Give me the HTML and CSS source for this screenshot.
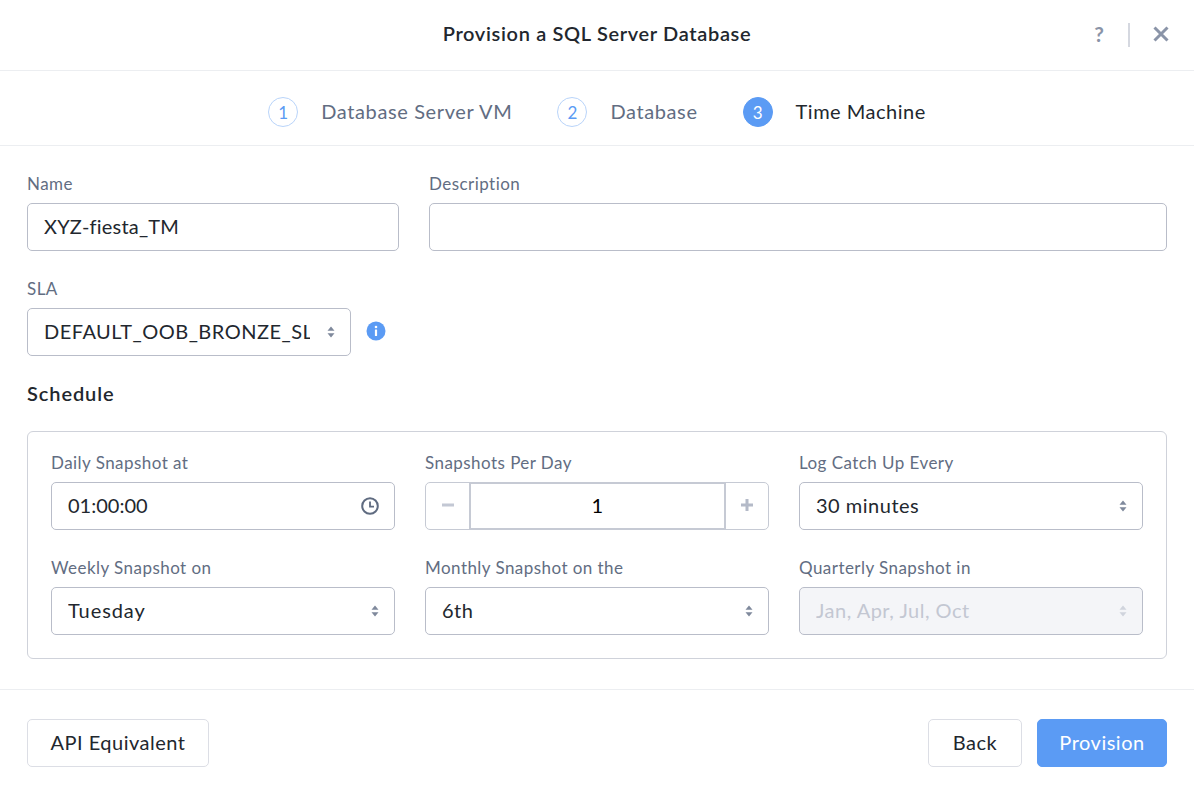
FILE: index.html
```html
<!DOCTYPE html>
<html lang="en">
<head>
    <meta charset="UTF-8">
    <meta name="viewport" content="width=device-width, initial-scale=1.0">
    <title>Provision a SQL Server Database</title>
    <link rel="stylesheet" href="styles.css">
</head>
<body>
    <div class="modal">
        <header class="modal-header">
            <h1>Provision a SQL Server Database</h1>
            <div class="header-actions">
                <button class="help-btn" type="button">?</button>
                <span class="header-divider"></span>
                <button class="close-btn" type="button" aria-label="Close">
                    <svg width="16" height="16" viewBox="0 0 16 16"><path d="M1.5 1.5l13 13M14.5 1.5l-13 13" stroke="#8a94a8" stroke-width="3" fill="none"/></svg>
                </button>
            </div>
        </header>

        <nav class="steps">
            <div class="step"><span class="step-num">1</span><span class="step-label">Database Server VM</span></div>
            <div class="step"><span class="step-num">2</span><span class="step-label">Database</span></div>
            <div class="step active"><span class="step-num">3</span><span class="step-label">Time Machine</span></div>
        </nav>

        <form class="form-body">
            <div class="row-name">
                <div class="field">
                    <label for="name">Name</label>
                    <input id="name" type="text" value="XYZ-fiesta_TM">
                </div>
                <div class="field">
                    <label for="description">Description</label>
                    <input id="description" type="text">
                </div>
            </div>

            <div class="field sla-field">
                <label for="sla">SLA</label>
                <div class="sla-row">
                    <div class="select-wrap sla-select">
                        <select id="sla"><option>DEFAULT_OOB_BRONZE_SLA</option></select>
                        <svg class="chevrons" width="8" height="12" viewBox="0 0 8 12"><path d="M4 .5l3.5 4.2H.5zM4 11.5L.5 7.3h7z" fill="#7f899c"/></svg>
                    </div>
                    <span class="info-icon">
                        <svg width="20" height="20" viewBox="0 0 20 20"><circle cx="10" cy="10" r="9.5" fill="#5b9bf4"/><circle cx="10" cy="6" r="1.3" fill="#fff"/><rect x="8.9" y="8.5" width="2.2" height="6.5" rx="0.5" fill="#fff"/></svg>
                    </span>
                </div>
            </div>

            <h2 class="section-title">Schedule</h2>

            <div class="schedule-box">
                <div class="field">
                    <label for="daily">Daily Snapshot at</label>
                    <div class="select-wrap">
                        <input id="daily" type="text" value="01:00:00">
                        <svg class="clock" width="18" height="18" viewBox="0 0 18 18"><circle cx="9" cy="9" r="7.8" fill="none" stroke="#5f6b80" stroke-width="2"/><path d="M9 4.5V9.6h4" fill="none" stroke="#5f6b80" stroke-width="1.8"/></svg>
                    </div>
                </div>
                <div class="field">
                    <label for="perday">Snapshots Per Day</label>
                    <div class="stepper">
                        <button type="button" class="stepper-btn">
                            <svg width="12" height="12" viewBox="0 0 12 12"><rect x="0" y="4.5" width="12" height="3" fill="#c3c8d4"/></svg>
                        </button>
                        <input id="perday" type="text" value="1">
                        <button type="button" class="stepper-btn">
                            <svg width="12" height="12" viewBox="0 0 12 12"><path d="M4.5 0h3v4.5H12v3H7.5V12h-3V7.5H0v-3h4.5z" fill="#b4bac8"/></svg>
                        </button>
                    </div>
                </div>
                <div class="field">
                    <label for="logcatch">Log Catch Up Every</label>
                    <div class="select-wrap">
                        <select id="logcatch"><option>30 minutes</option></select>
                        <svg class="chevrons" width="8" height="12" viewBox="0 0 8 12"><path d="M4 .5l3.5 4.2H.5zM4 11.5L.5 7.3h7z" fill="#7f899c"/></svg>
                    </div>
                </div>
                <div class="field">
                    <label for="weekly">Weekly Snapshot on</label>
                    <div class="select-wrap">
                        <select id="weekly"><option>Tuesday</option></select>
                        <svg class="chevrons" width="8" height="12" viewBox="0 0 8 12"><path d="M4 .5l3.5 4.2H.5zM4 11.5L.5 7.3h7z" fill="#7f899c"/></svg>
                    </div>
                </div>
                <div class="field">
                    <label for="monthly">Monthly Snapshot on the</label>
                    <div class="select-wrap">
                        <select id="monthly"><option>6th</option></select>
                        <svg class="chevrons" width="8" height="12" viewBox="0 0 8 12"><path d="M4 .5l3.5 4.2H.5zM4 11.5L.5 7.3h7z" fill="#7f899c"/></svg>
                    </div>
                </div>
                <div class="field">
                    <label for="quarterly">Quarterly Snapshot in</label>
                    <div class="select-wrap">
                        <select id="quarterly" disabled><option>Jan, Apr, Jul, Oct</option></select>
                        <svg class="chevrons" width="8" height="12" viewBox="0 0 8 12"><path d="M4 .5l3.5 4.2H.5zM4 11.5L.5 7.3h7z" fill="#d0d4dd"/></svg>
                    </div>
                </div>
            </div>
        </form>

        <footer class="modal-footer">
            <button type="button" class="btn btn-api">API Equivalent</button>
            <div class="footer-right">
                <button type="button" class="btn btn-back">Back</button>
                <button type="button" class="btn btn-primary">Provision</button>
            </div>
        </footer>
    </div>
</body>
</html>
```

FILE: styles.css
```css
* {
    box-sizing: border-box;
}

body {
    font-family: "Lato", "Open Sans", sans-serif;
    margin: 0;
    padding: 0;
    background-color: #fff;
    color: #22272e;
}

.modal {
    width: 1194px;
    height: 792px;
    display: flex;
    flex-direction: column;
}

.modal-header {
    height: 71px;
    padding-bottom: 4px;
    border-bottom: 1px solid #eceef1;
    display: flex;
    align-items: center;
    justify-content: center;
    position: relative;
}

.modal-header h1 {
    font-size: 20px;
    font-weight: 600;
    letter-spacing: 0.66px;
    margin: 0;
    color: #22272e;
}

.header-actions {
    position: absolute;
    top: 23px;
    right: 25px;
    display: flex;
    align-items: center;
    height: 24px;
}

.help-btn,
.close-btn {
    background: none;
    border: none;
    padding: 0;
    margin-bottom: 3px;
    cursor: pointer;
    display: flex;
    align-items: center;
    justify-content: center;
}

.help-btn {
    font-family: inherit;
    font-size: 21px;
    font-weight: 700;
    color: #8a94a8;
    width: 14px;
}

.header-divider {
    width: 2px;
    height: 24px;
    background-color: #d5d8e0;
    margin: 0 23px 0 22px;
}

.close-btn {
    width: 16px;
    height: 16px;
}

.steps {
    height: 75px;
    border-bottom: 1px solid #eceef1;
    display: flex;
    align-items: center;
    justify-content: center;
    gap: 45px;
    padding-top: 8px;
}

.step {
    display: flex;
    align-items: center;
    gap: 23px;
}

.step-num {
    width: 30px;
    height: 30px;
    border-radius: 50%;
    border: 1px solid #b9d4fa;
    color: #5b9bf4;
    font-size: 17px;
    display: flex;
    align-items: center;
    justify-content: center;
}

.step-label {
    font-size: 20px;
    letter-spacing: 0.62px;
    padding-bottom: 2px;
    color: #626d82;
}

.step.active .step-num {
    background-color: #5b9bf4;
    border-color: #5b9bf4;
    color: #fff;
}

.step.active .step-label {
    letter-spacing: 0.5px;
    color: #22272e;
}

.form-body {
    flex: 1;
    padding: 27px 27px 0;
    border-bottom: 1px solid #eceef1;
}

.row-name {
    display: grid;
    grid-template-columns: 372px 1fr;
    gap: 30px;
}

.field label {
    display: block;
    font-size: 17px;
    line-height: 20px;
    letter-spacing: 0.45px;
    color: #626d82;
    padding-top: 1px;
    margin-bottom: 9px;
}

.sla-field {
    margin-top: 27px;
}

.sla-row {
    display: flex;
    align-items: center;
    gap: 15px;
}

.sla-select {
    width: 324px;
}

.info-icon {
    display: flex;
    margin-top: -2px;
}

input,
select {
    font-family: inherit;
    font-size: 20px;
    letter-spacing: 0.5px;
    color: #22272e;
    width: 100%;
    height: 48px;
    padding: 0 16px 2px;
    border: 1px solid #b9bdc9;
    border-radius: 5px;
    background-color: #fff;
    outline: none;
}

#name {
    letter-spacing: 0.2px;
}

#daily {
    letter-spacing: 0;
}

#weekly {
    letter-spacing: 0.9px;
}

select {
    appearance: none;
    padding-right: 40px;
}

select:disabled {
    background-color: #f4f5f8;
    color: #c3c7d2;
    opacity: 1;
}

.select-wrap {
    position: relative;
}

.chevrons {
    position: absolute;
    right: 16px;
    top: 18px;
    pointer-events: none;
}

.clock {
    position: absolute;
    right: 16px;
    top: 15px;
}

.section-title {
    font-size: 20px;
    font-weight: 600;
    letter-spacing: 0.9px;
    line-height: 24px;
    margin: 25px 0 26px;
    color: #22272e;
}

.schedule-box {
    border: 1px solid #cfd2da;
    border-radius: 6px;
    padding: 20px 23px 23px;
    display: grid;
    grid-template-columns: repeat(3, 344px);
    gap: 27px 30px;
}

.stepper {
    display: flex;
    height: 48px;
    border: 1px solid #c6cad4;
    border-radius: 5px;
}

.stepper-btn {
    width: 43px;
    background: none;
    border: none;
    padding: 0 0 2px;
    cursor: pointer;
    display: flex;
    align-items: center;
    justify-content: center;
}

.stepper-btn:last-child {
    width: 42px;
}

.stepper input {
    flex: 1;
    height: 46px;
    border: 2px solid #c6cad4;
    border-top-width: 1px;
    border-bottom-width: 1px;
    border-radius: 0;
    text-align: center;
    color: #000;
}

.modal-footer {
    height: 102px;
    padding: 29px 27px 25px;
    display: flex;
    justify-content: space-between;
}

.footer-right {
    display: flex;
    gap: 15px;
}

.btn {
    font-family: inherit;
    font-size: 20px;
    letter-spacing: 0.5px;
    height: 48px;
    border-radius: 5px;
    border: 1px solid #dcdee5;
    background-color: #fff;
    color: #22272e;
    cursor: pointer;
    padding: 0 0 2px;
}

.btn-api {
    width: 182px;
}

.btn-back {
    width: 94px;
}

.btn-primary {
    width: 130px;
    background-color: #5b9bf4;
    border-color: #5b9bf4;
    color: #fff;
}
```
